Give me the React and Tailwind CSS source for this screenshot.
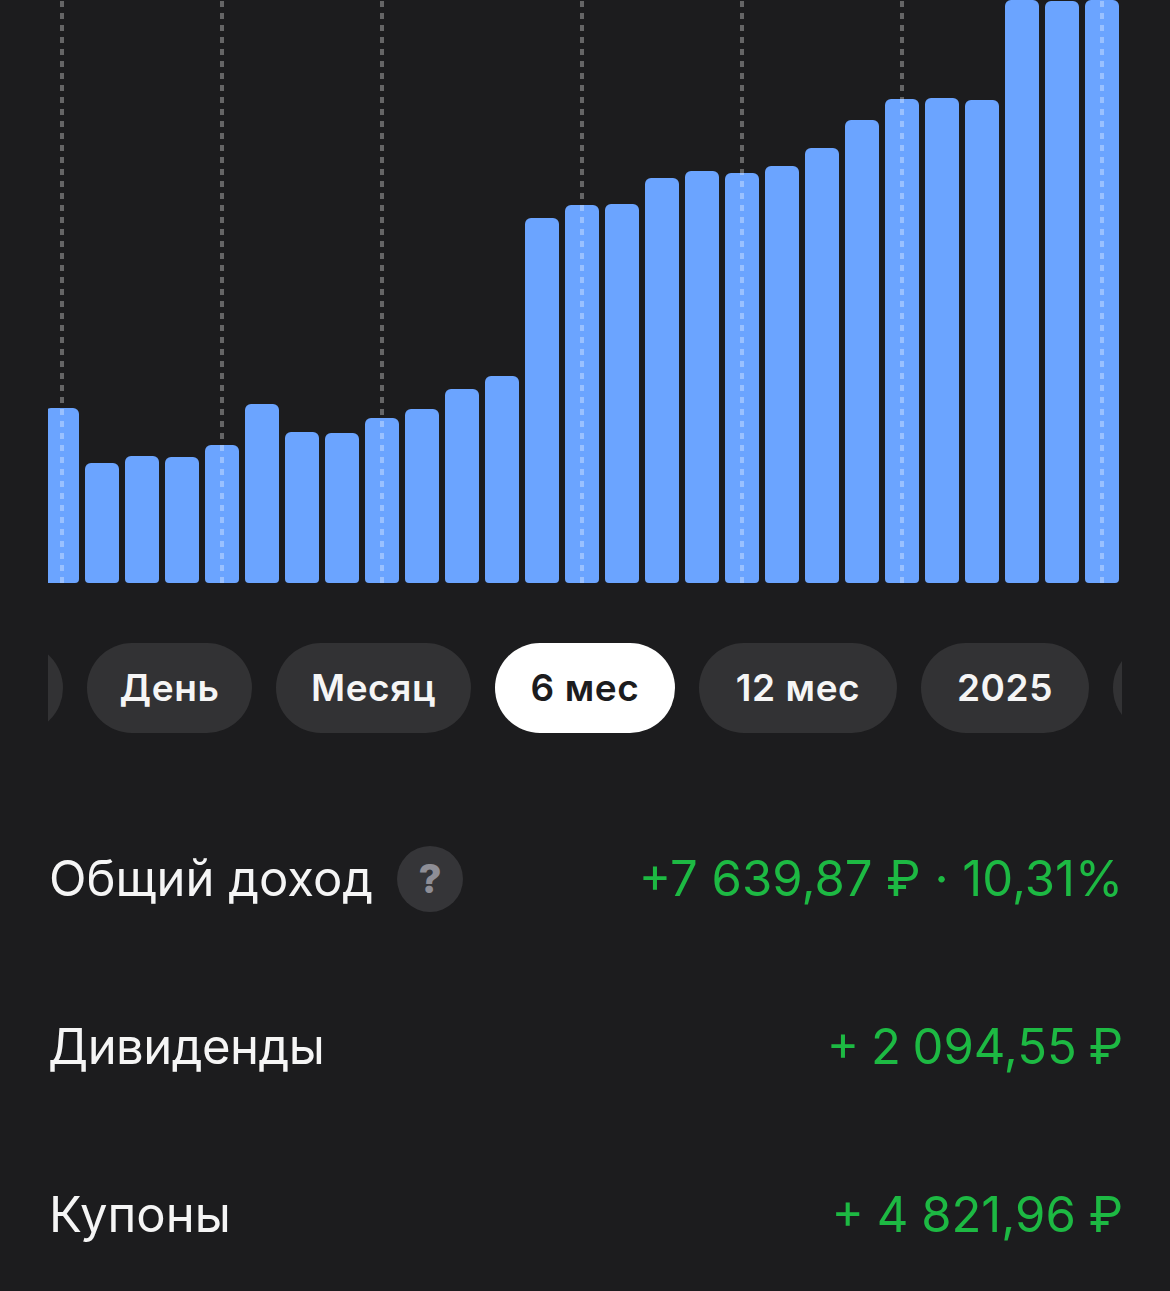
const bars = [
  { top: 408, line: true },
  { top: 463 },
  { top: 456 },
  { top: 457 },
  { top: 445, line: true },
  { top: 404 },
  { top: 432 },
  { top: 433 },
  { top: 418, line: true },
  { top: 409 },
  { top: 389 },
  { top: 376 },
  { top: 218 },
  { top: 205, line: true },
  { top: 204 },
  { top: 178 },
  { top: 171 },
  { top: 173, line: true },
  { top: 166 },
  { top: 148 },
  { top: 120 },
  { top: 99, line: true },
  { top: 98 },
  { top: 100 },
  { top: -8 },
  { top: 1 },
  { top: -8, line: true },
];

const periods = [
  { label: "День", width: "w-[165px]" },
  { label: "Месяц", width: "w-[195px]" },
  { label: "6 мес", width: "w-[180px]", active: true },
  { label: "12 мес", width: "w-[198px]" },
  { label: "2025", width: "w-[168px]" },
];

function Bar({ top, line }) {
  return (
    <div className="relative w-[34px] shrink-0 h-full flex flex-col justify-end">
      <div
        className="bg-[#6ba4ff] rounded-[6px] rounded-b-[4px]"
        style={{ height: 583 - top }}
      />
      {line && (
        <div className="absolute top-[1px] bottom-0 left-[15px] w-[4px] bg-[repeating-linear-gradient(to_bottom,rgba(255,255,255,0.32)_0px,rgba(255,255,255,0.32)_6px,transparent_6px,transparent_12px)]" />
      )}
    </div>
  );
}

function Pill({ label, width, active }) {
  return (
    <div
      className={`${width} shrink-0 h-[90px] rounded-[45px] flex items-center justify-center text-[37px] font-semibold tracking-[0.6px] ${
        active ? "bg-white text-[#1c1c1e]" : "bg-[#323234] text-[#f5f5f5]"
      }`}
    >
      {label}
    </div>
  );
}

function Row({ label, value, hint, labelClass = "", valueClass = "" }) {
  return (
    <div className="flex items-center justify-between h-[66px]">
      <div className={`flex items-center gap-[24px] text-[49px] text-[#f5f5f5] ${labelClass}`}>
        <span>{label}</span>
        {hint && (
          <span className="w-[66px] h-[66px] rounded-full bg-[#353538] flex items-center justify-center text-[40px] font-extrabold text-[#8e8e96]">
            ?
          </span>
        )}
      </div>
      <span className={`text-[49px] text-[#1db943] ${valueClass}`}>{value}</span>
    </div>
  );
}

export default function App() {
  return (
    <div className="w-[1170px] h-[1291px] bg-[#1c1c1e] overflow-hidden font-['Inter','Liberation_Sans',sans-serif]">
      <div className="ml-[48px] w-[1071px] h-[583px] overflow-hidden">
        <div className="flex gap-[6px] h-full -ml-[3px]">
          {bars.map((b, i) => (
            <Bar key={i} top={b.top} line={b.line} />
          ))}
        </div>
      </div>

      <div className="ml-[48px] w-[1074px] mt-[60px] overflow-hidden flex gap-[24px]">
        <div className="w-[90px] -ml-[75px] shrink-0 h-[90px] rounded-[45px] bg-[#323234]" />
        {periods.map((p) => (
          <Pill key={p.label} {...p} />
        ))}
        <div className="w-[90px] shrink-0 h-[90px] rounded-[45px] bg-[#323234]" />
      </div>

      <div className="ml-[49px] w-[1074px] mt-[112px] flex flex-col gap-[102px] pt-[1px]">
        <Row label="Общий доход" value="+7 639,87 ₽ · 10,31%" hint />
        <Row
          label="Дивиденды"
          value="+ 2 094,55 ₽"
          labelClass="-ml-[1px] tracking-[-0.5px]"
          valueClass="[word-spacing:-2px]"
        />
        <Row label="Купоны" value="+ 4 821,96 ₽" valueClass="[word-spacing:-1px]" />
      </div>
    </div>
  );
}
